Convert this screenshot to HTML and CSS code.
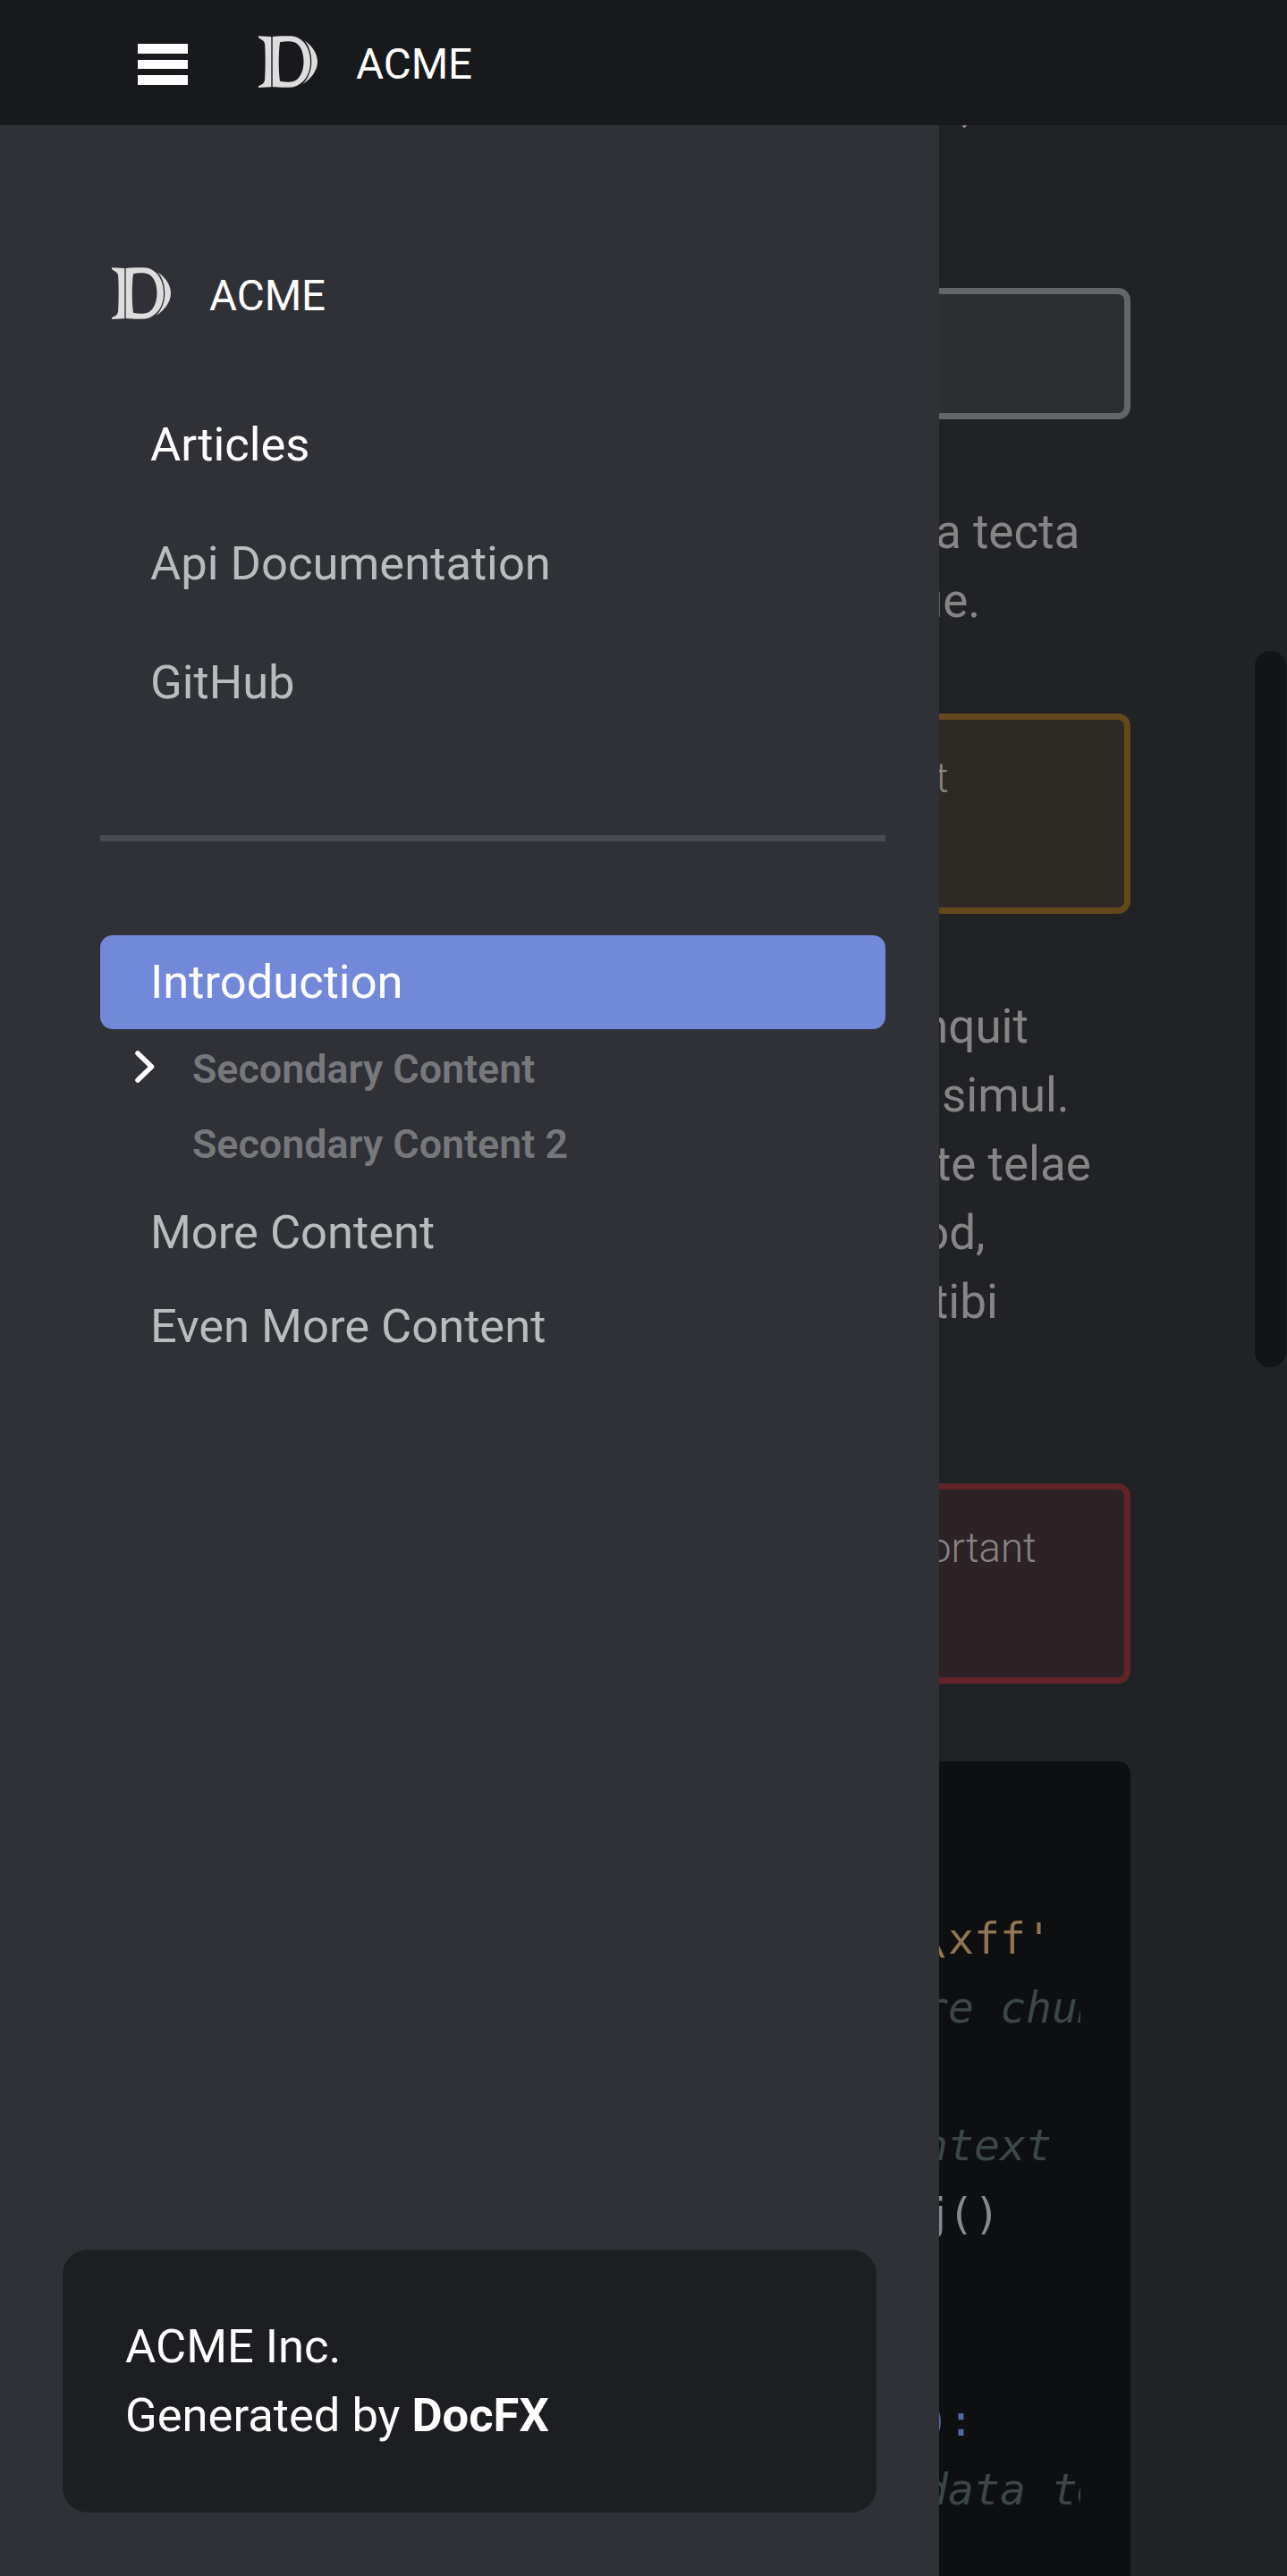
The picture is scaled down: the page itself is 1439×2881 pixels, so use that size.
FILE: index.html
```html
<!DOCTYPE html>
<html lang="en">
<head>
<meta charset="utf-8">
<title>ACME</title>
<link rel="stylesheet" href="styles.css">
</head>
<body>
<svg width="0" height="0" class="defs" aria-hidden="true">
  <symbol id="logo" viewBox="0 0 66 58">
    <path d="M0 0.3 L14.3 0.9 V57.2 L0 58 V56.2 C4.5 54.3 7 53.5 7.2 47 C7.8 35 7.8 22 7.2 10 C7 5.500 3.500 4.500 0 2Z"/>
    <path fill-rule="evenodd" d="M15.700 0.900 C23 0.300 30 0.300 36 0.300 C50 1 58 14 58 29 C58 44 50 55 38 57.500 C30 57.900 22 57.700 15.700 57.200Z M24 7.200 C22.300 20 22.300 38 24 50.800 C30 52.200 36 52.200 41 50.300 C47.500 46.500 50.500 38 50.500 29 C50.500 19 47.500 11 41 7.500 C36 5.800 30 5.800 24 7.200Z"/>
    <path d="M51.500 5.500 C60 11.500 66 19.500 66 29 C66 38.500 59.500 47.500 49.500 54 C55.500 48 59.300 39 59.300 29 C59.300 19.500 56.500 11.500 51.500 5.500Z"/>
  </symbol>
</svg>
<header class="topbar">
  <button class="menu" aria-label="Menu"><span></span><span></span><span></span></button>
  <a class="brand"><svg class="logo"><use href="#logo"/></svg><span>ACME</span></a>
</header>
<div class="layout">
  <aside class="drawer">
    <a class="brand"><svg class="logo"><use href="#logo"/></svg><span>ACME</span></a>
    <nav class="site-nav">
      <a class="current">Articles</a>
      <a>Api Documentation</a>
      <a>GitHub</a>
    </nav>
    <hr>
    <nav class="toc">
      <a class="active">Introduction</a>
      <div class="sub">
        <a><svg class="chevron" viewBox="0 0 22 36"><path d="M3 3 L18.500 18 L3 33"/></svg><span>Secondary Content</span></a>
        <a><span>Secondary Content 2</span></a>
      </div>
      <a>More Content</a>
      <a>Even More Content</a>
    </nav>
    <footer class="credits">
      <div>ACME Inc.</div>
      <div>Generated by <b>DocFX</b></div>
    </footer>
  </aside>
  <main class="content">
    <article>
      <p class="lead"><span class="l-comma">,</span></p>
      <div class="note plain"></div>
      <p class="first"><span class="l-tecta">a tecta</span><span class="l-ue">ue.</span></p>
      <div class="note warning"><span class="l-t">t</span></div>
      <p class="second"><span class="l-inquit">nquit</span><span class="l-simul">simul.</span><span class="l-telae">te telae</span><span class="l-od">od,</span><span class="l-tibi">tibi</span></p>
      <div class="note danger"><span class="l-ortant">ortant</span></div>
      <pre class="code"><code><span class="str">\xff'</span>
<i>re chu<span class="tail">nk</span></i>

<i>ntext <span class="tail">to</span></i>
<span class="lead-char">j</span>()


<span class="kw"><span class="lead-char paren">)</span>:</span>
<i>data t<span class="tail">o</span></i>
</code></pre>
    </article>
    <div class="scrollbar"></div>
  </main>
</div>
</body>
</html>
```
FILE: styles.css
```css
* { box-sizing: border-box; }
body {
  margin: 0;
  width: 1439px;
  height: 2881px;
  overflow: hidden;
  background: #212225;
  font-family: Roboto, sans-serif;
  font-size: 52.500px;
  line-height: 77px;
  color: #fff;
}
.defs { display: block; }
.topbar {
  display: flex;
  align-items: center;
  height: 140px;
  padding-left: 154px;
  background: #18191c;
}
.menu {
  display: flex;
  flex-direction: column;
  gap: 7px;
  width: 56px;
  margin: 4px 79px 0 0;
  padding: 0;
  border: 0;
  background: none;
}
.menu span { height: 10.500px; background: #fff; }
.brand { display: flex; align-items: center; height: 77px; font-size: 47.500px; }
.topbar .brand { margin-top: -2px; }
.topbar .brand span { padding-top: 7px; }
.logo { width: 66px; height: 58px; margin-right: 43px; fill: #ddd; }
.layout { display: flex; height: 2741px; }
.drawer {
  display: flex;
  flex-direction: column;
  width: 1050px;
  background: #2f3136;
}
.drawer .brand { margin: 149px 0 0 125px; }
.drawer .brand span { padding-top: 7px; }
.site-nav { display: flex; flex-direction: column; margin: 93px 0 0 168px; gap: 56px; }
.site-nav a { color: #b9bbbe; }
.site-nav a.current { color: #fff; }
hr { width: 878px; height: 7px; margin: 132px 0 0 112px; border: 0; background: #494b51; }
.toc { display: flex; flex-direction: column; width: 878px; margin: 105px 0 0 112px; }
.toc > a { height: 105px; padding-left: 56px; line-height: 105px; color: #b9bbbe; }
.toc > a.active { border-radius: 14px; background: #7289da; color: #fff; }
.sub { margin-bottom: 7px; }
.sub a {
  display: flex;
  align-items: center;
  height: 84px;
  padding-left: 103px;
  font-size: 44.800px;
  font-weight: 600;
  color: #77787b;
}
.sub span { padding-top: 4px; }
.chevron {
  width: 22px;
  height: 36px;
  margin: 0 42px 0 -64px;
  fill: none;
  stroke: #fff;
  stroke-width: 5.500;
  stroke-linecap: round;
  stroke-linejoin: round;
}
.credits {
  width: 910px;
  height: 294px;
  margin: auto 0 71px 70px;
  padding: 70px;
  border-radius: 28px;
  background: #1d1e21;
}
.content { display: flex; width: 389px; overflow: hidden; color: #858585; }
article { width: 214px; overflow: hidden; font-size: 53px; }
article p { margin: 0; }
article p span { display: block; white-space: nowrap; }
p.lead { margin-top: -60px; }
.note {
  margin-left: -20px;
  padding: 27px 0 0 20px;
  border: 7px solid #646566;
  border-left: 0;
  border-radius: 14px;
  font-size: 45.500px;
  font-weight: 300;
}
.note span { display: block; }
.plain { height: 147px; margin-top: 165px; background: #2d2e31; }
.first { padding-top: 88px; }
.warning { height: 224px; margin-top: 87px; border-color: #62481a; background: #2d2924; }
.second { padding-top: 88px; }
.danger { height: 224px; margin-top: 164px; border-color: #612529; background: #2d2226; }
.l-comma { margin-left: 25px; }
.l-tecta { margin-left: -4px; }
.l-ue { margin-left: -25px; }
.l-t { margin-left: -4px; }
.l-inquit { margin-left: -19px; }
.l-simul { margin-left: 3px; }
.l-telae { margin-left: -4px; }
.l-od { margin-left: -19px; }
.l-tibi { margin-left: -7px; }
.l-ortant { margin-left: -12px; }
.code {
  height: 912px;
  margin: 87px 0 0;
  padding: 160px 56px 0 0;
  border-top-right-radius: 14px;
  background: #0e0f10;
  color: #868990;
  font: 48.200px/77px "DejaVu Sans Mono", monospace;
}
.code code { display: block; margin-left: -19px; overflow: hidden; font: inherit; }
.code .str { color: #8e7554; }
.code i { color: #3b4746; }
.code .kw { color: #5068a0; }
.code .lead-char { margin: 0 -4px 0 4px; }
.code .paren { margin: 0 -2px 0 2px; }
.code .tail { margin-left: -2px; }
.scrollbar {
  width: 35px;
  height: 801px;
  margin: 588px 0 0 139px;
  border-radius: 18px;
  background: #131418;
}
```
